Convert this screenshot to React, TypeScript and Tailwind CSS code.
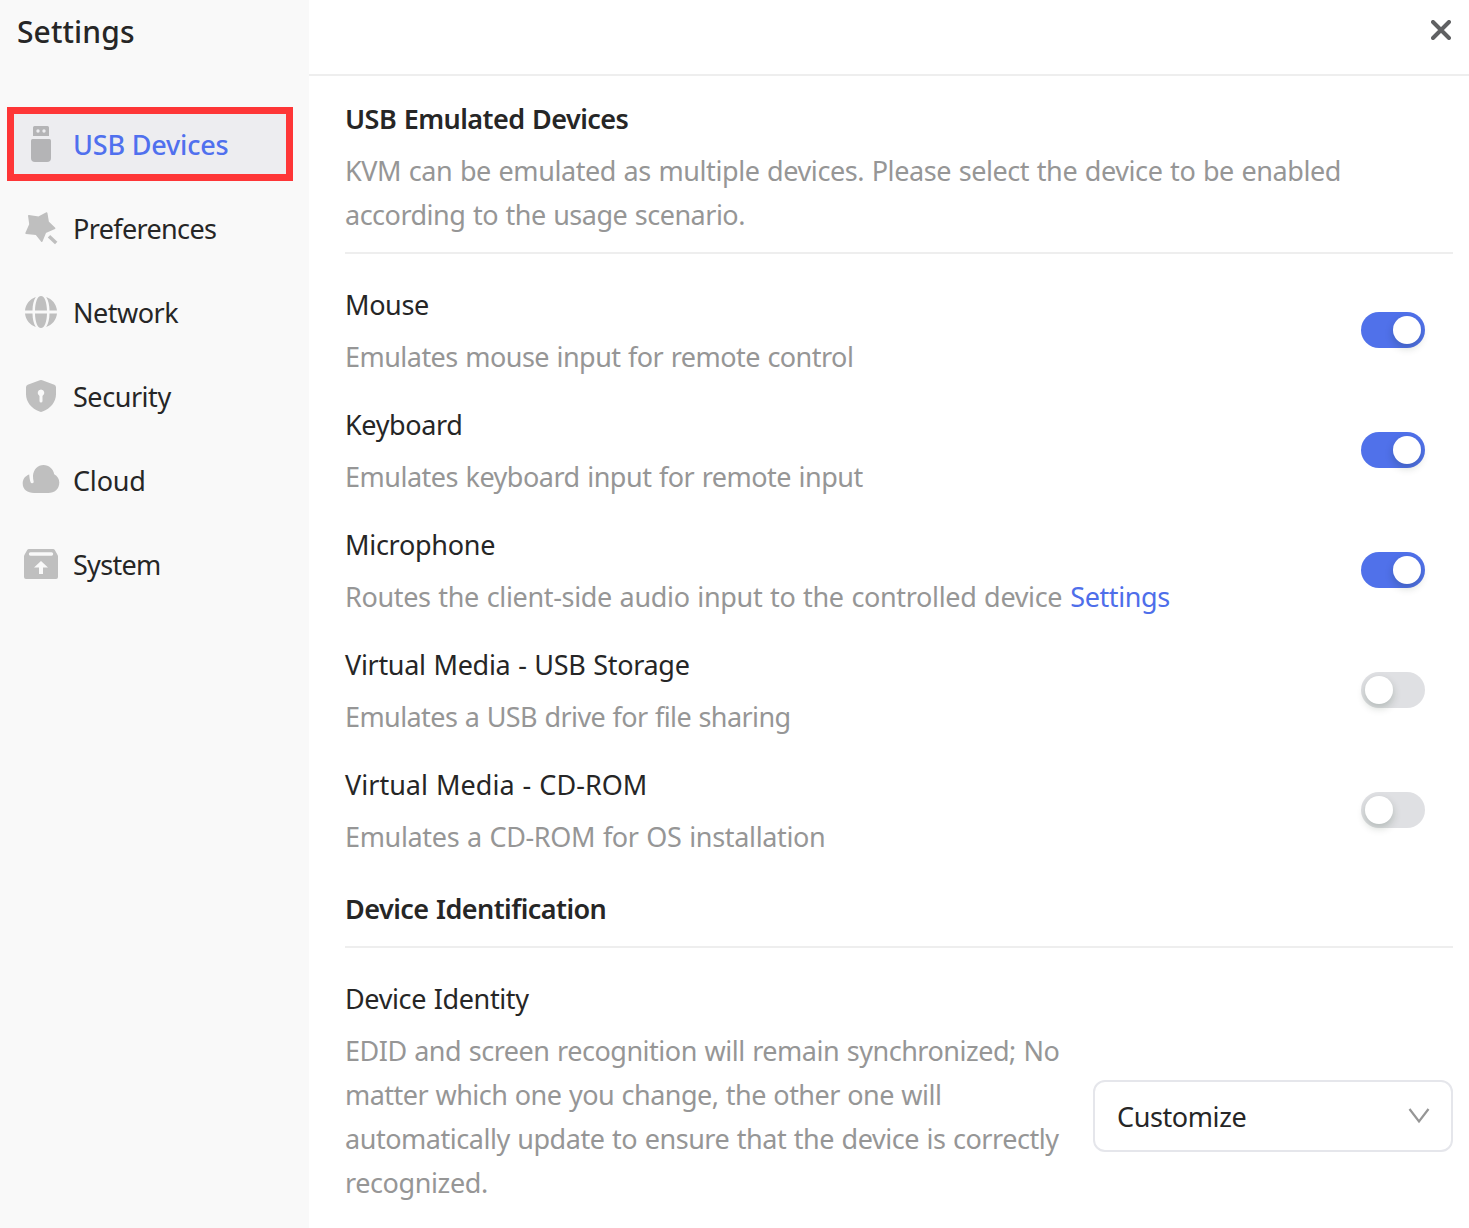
import { useState } from "react";
import type { ReactNode } from "react";

type MenuItem = {
  label: string;
  icon: ReactNode;
  tracking: string;
};

type Device = {
  name: string;
  description: string;
  nameTracking: string;
  descTracking: string;
  link?: string;
};

const menu: MenuItem[] = [
  {
    label: "USB Devices",
    tracking: "tracking-[-0.19px]",
    icon: (
      <svg className="size-10" viewBox="0 0 40 40" fill="#b4b4b6">
        <path
          fillRule="evenodd"
          d="M13.500 2h13a1.500 1.500 0 0 1 1.500 1.500V12H12V3.500A1.500 1.500 0 0 1 13.500 2ZM15.300 7a1.700 1.700 0 0 0 3.400 0a1.700 1.700 0 0 0-3.400 0ZM21.300 7a1.700 1.700 0 0 0 3.400 0a1.700 1.700 0 0 0-3.400 0Z"
        />
        <path d="M11.500 15h17a1.500 1.500 0 0 1 1.500 1.500V34a4 4 0 0 1-4 4H14a4 4 0 0 1-4-4V16.500a1.500 1.500 0 0 1 1.500-1.500Z" />
      </svg>
    ),
  },
  {
    label: "Preferences",
    tracking: "tracking-[-0.64px]",
    icon: (
      <svg className="size-10" viewBox="0 0 40 40" fill="#bfbfbf" stroke="#bfbfbf">
        <path
          strokeWidth="1.5"
          strokeLinejoin="round"
          d="M7.800 7.800L17.700 9.200L25.700 5L27.200 14L33.700 20.200L24.500 24.300L20.800 33.200L15.200 26.300L5 25.200L9 16.300Z"
        />
        <path strokeWidth="3.500" d="M28 28.200L35.200 35" />
      </svg>
    ),
  },
  {
    label: "Network",
    tracking: "tracking-[-0.5px]",
    icon: (
      <svg className="size-10" viewBox="0 0 40 40" fill="#bfbfbf">
        <path d="M20 4c3.500 0 5.800 6 6 14.500H14C14.200 10 16.500 4 20 4ZM14 21.500h12C25.800 30 23.500 36 20 36s-5.800-6-6-14.500Z" />
        <path d="M14.800 5C12.600 8.500 11.600 13 11.500 18.500H4C4.600 12 9 7 14.800 5ZM25.200 5c2.200 3.500 3.200 8 3.300 13.500H36C35.400 12 31 7 25.200 5ZM4 21.500h7.500c.1 5.500 1.100 10 3.300 13.500C9 33 4.600 28 4 21.500ZM28.500 21.500H36C35.400 28 31 33 25.200 35c2.200-3.500 3.200-8 3.300-13.500Z" />
      </svg>
    ),
  },
  {
    label: "Security",
    tracking: "tracking-[-0.45px]",
    icon: (
      <svg className="size-10" viewBox="0 0 40 40" fill="#bfbfbf">
        <path
          fillRule="evenodd"
          d="M18.800 4.300q1.200-.500 2.400 0L33.300 8.800q1.700.7 1.700 2.400v7C35 26 29.500 32.500 21.500 35.600q-1.500.6-3 0C10.500 32.500 5 26 5 18.200v-7q0-1.700 1.700-2.400ZM20 13.500a3.400 3.400 0 0 0-1.500 6.400V25a1.500 1.500 0 0 0 3 0v-5.100A3.400 3.400 0 0 0 20 13.500Z"
        />
      </svg>
    ),
  },
  {
    label: "Cloud",
    tracking: "tracking-[-0.2px]",
    icon: (
      <svg className="size-10" viewBox="0 0 40 40" fill="#bfbfbf">
        <path d="M8.200 14.600C8.500 18 8.900 20.500 9.600 22.300a1.600 1.600 0 0 0 3.100-.6c-.5-2-.8-4-.7-6C12.500 9.500 16.800 5 22.500 5c5.500 0 9.800 4 10.700 9.200 3.200 1.700 5.100 4.800 5.100 8.300 0 6.500-4.800 10.500-11 10.500H13C6.500 33 1.700 29.500 1.700 23.500c0-4.300 2.500-7.500 6.500-8.900Z" />
      </svg>
    ),
  },
  {
    label: "System",
    tracking: "tracking-[-0.7px]",
    icon: (
      <svg className="size-10" viewBox="0 0 40 40" fill="#bfbfbf">
        <path
          fillRule="evenodd"
          d="M8 5h24a2 2 0 0 1 1.800 1.100L36.600 11q.4.700.4 1.500V33a2 2 0 0 1-2 2H5a2 2 0 0 1-2-2V12.500q0-.8.400-1.500L6.200 6.100A2 2 0 0 1 8 5ZM9.500 8.300a1.600 1.600 0 0 0 0 3.400h21a1.600 1.600 0 0 0 0-3.400ZM20 17l-7 6.500h5V30h4v-6.500h5Z"
        />
      </svg>
    ),
  },
];

const devices: Device[] = [
  {
    name: "Mouse",
    description: "Emulates mouse input for remote control",
    nameTracking: "tracking-[-0.35px]",
    descTracking: "tracking-[-0.53px]",
  },
  {
    name: "Keyboard",
    description: "Emulates keyboard input for remote input",
    nameTracking: "tracking-[-0.38px]",
    descTracking: "tracking-[-0.5px]",
  },
  {
    name: "Microphone",
    description: "Routes the client-side audio input to the controlled device",
    nameTracking: "tracking-[-0.28px]",
    descTracking: "tracking-[-0.34px]",
    link: "Settings",
  },
  {
    name: "Virtual Media - USB Storage",
    description: "Emulates a USB drive for file sharing",
    nameTracking: "tracking-[-0.3px]",
    descTracking: "tracking-[-0.59px]",
  },
  {
    name: "Virtual Media - CD-ROM",
    description: "Emulates a CD-ROM for OS installation",
    nameTracking: "tracking-[0.02px]",
    descTracking: "tracking-[-0.34px]",
  },
];

function Toggle({ on, onClick }: { on: boolean; onClick: () => void }) {
  return (
    <button
      role="switch"
      aria-checked={on}
      onClick={onClick}
      className={`mt-[29px] flex h-9 w-16 shrink-0 items-center rounded-full px-1 transition-colors ${
        on ? "justify-end bg-[#5071ea]" : "justify-start bg-[#dfe0e3]"
      }`}
    >
      <span className="size-7 rounded-full bg-white shadow-[0_4px_8px_rgba(0,35,11,0.2)]" />
    </button>
  );
}

export default function App() {
  const [active, setActive] = useState("USB Devices");
  const [enabled, setEnabled] = useState([true, true, true, false, false]);

  function toggleDevice(index: number) {
    setEnabled(enabled.map((val, i) => (i === index ? !val : val)));
  }

  return (
    <div className="flex h-[1228px] w-[1469px] overflow-hidden bg-white font-['Noto_Sans',sans-serif] text-[27px] leading-[44px] text-[#262626] [word-spacing:1px]">
      <aside className="w-[309px] shrink-0 bg-[#f9f9f9]">
        <h1 className="pt-[10px] pl-[17px] text-[30px] font-medium tracking-[0.1px]">
          Settings
        </h1>
        <nav className="mt-[53px] flex flex-col gap-[10px] pl-[7px]">
          {menu.map((item) => (
            <button
              key={item.label}
              onClick={() => setActive(item.label)}
              className={`flex h-[74px] w-[286px] items-center whitespace-nowrap ${item.tracking} ${
                item.label === active
                  ? "border-[7px] border-[#fe3637] bg-[#ededf0] pl-[7px] font-medium text-[#5070ee]"
                  : "pl-[14px]"
              }`}
            >
              {item.icon}
              <span className="ml-3 pt-0.5">{item.label}</span>
            </button>
          ))}
        </nav>
      </aside>

      <main className="flex-1">
        <header className="flex h-[76px] justify-end border-b-2 border-[#eeeeee] pt-5 pr-[18px]">
          <button className="size-5">
            <svg className="size-5" viewBox="0 0 20 20" stroke="#606163" strokeWidth="4" strokeLinecap="round">
              <path d="M2 2l16 16M18 2L2 18" />
            </svg>
          </button>
        </header>

        <div className="pr-4 pl-9">
          <section className="border-b-2 border-[#eeeeee] pt-[21px] pb-[15px]">
            <h2 className="font-semibold tracking-[-0.55px]">USB Emulated Devices</h2>
            <p className="mt-2 whitespace-nowrap text-[#969696]">
              <span className="block tracking-[-0.418px]">
                KVM can be emulated as multiple devices. Please select the device to be enabled
              </span>
              <span className="block tracking-[-0.5px]">according to the usage scenario.</span>
            </p>
          </section>

          <ul className="flex flex-col gap-6 pt-[29px]">
            {devices.map((device, i) => (
              <li key={device.name} className="flex h-24 items-start justify-between pr-7 whitespace-nowrap">
                <div>
                  <h3 className={device.nameTracking}>{device.name}</h3>
                  <p className={`mt-2 text-[#969696] ${device.descTracking}`}>
                    {device.description}
                    {device.link && (
                      <a className="ml-2 tracking-[-0.4px] text-[#4e6eea]">{device.link}</a>
                    )}
                  </p>
                </div>
                <Toggle on={enabled[i]} onClick={() => toggleDevice(i)} />
              </li>
            ))}
          </ul>

          <h2 className="mt-7 border-b-2 border-[#eeeeee] pb-[15px] font-semibold tracking-[-0.55px]">
            Device Identification
          </h2>

          <section className="pt-[29px]">
            <h3 className="tracking-[-0.37px]">Device Identity</h3>
            <div className="mt-2 flex items-start justify-between">
              <p className="whitespace-nowrap text-[#969696]">
                <span className="block tracking-[-0.48px]">EDID and screen recognition will remain synchronized; No</span>
                <span className="block tracking-[-0.54px]">matter which one you change, the other one will</span>
                <span className="block tracking-[-0.47px]">automatically update to ensure that the device is correctly</span>
                <span className="block tracking-[-0.4px]">recognized.</span>
              </p>
              <button className="mt-[51px] flex h-[72px] w-[360px] shrink-0 items-center justify-between rounded-xl border-2 border-[#e5e6eb] pr-[21px] pl-[22px]">
                <span className="pt-0.5 tracking-[-0.4px]">Customize</span>
                <svg className="h-4 w-[22px]" viewBox="0 0 22 16" fill="none" stroke="#969696" strokeWidth="2.2">
                  <path d="M1.500 1l9.500 12.500L20.500 1" />
                </svg>
              </button>
            </div>
          </section>
        </div>
      </main>
    </div>
  );
}
